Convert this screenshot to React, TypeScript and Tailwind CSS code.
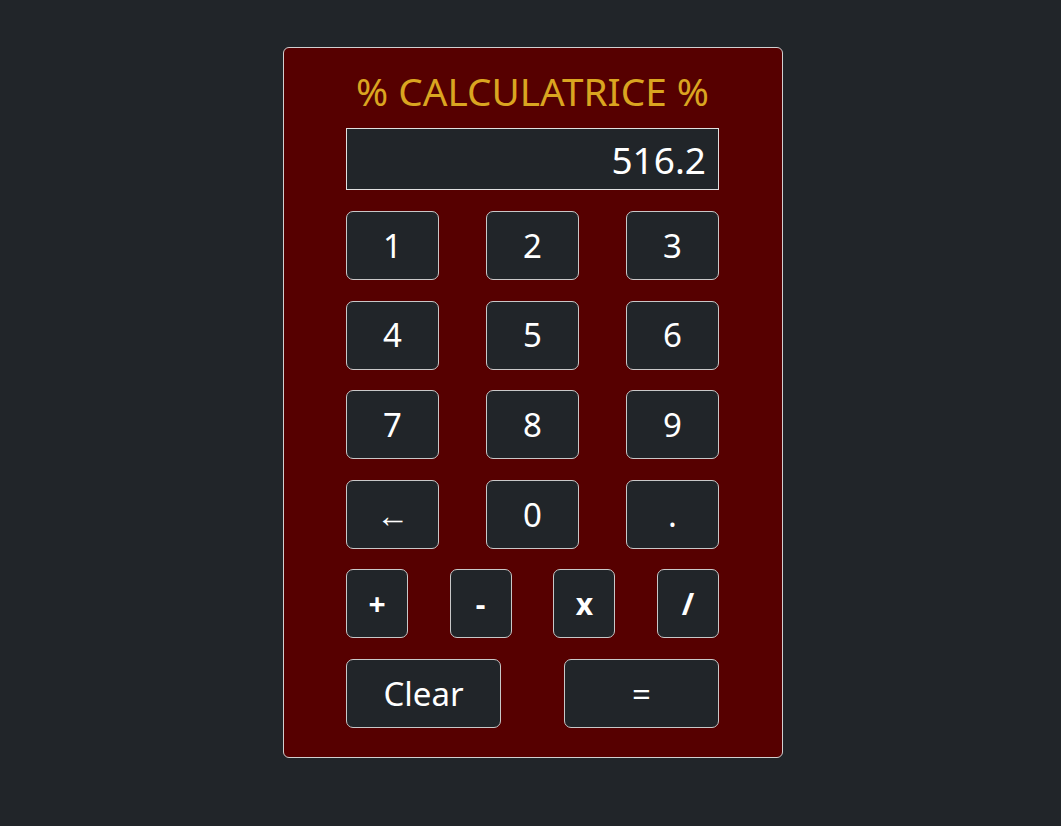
import React from "react";

const font = { fontFamily: '"Noto Sans", "Open Sans", sans-serif' };

function Btn({ label, w, bold }: { label: string; w: string; bold?: boolean }) {
  return (
    <button
      className={`${w} h-[69px] rounded-[7px] border border-[#c8c8c8] bg-[#212529] text-white flex items-center justify-center ${bold ? "font-bold text-[30px]" : "text-[33px]"}`}
    >
      {label}
    </button>
  );
}

export default function App() {
  const rows = [
    ["1", "2", "3"],
    ["4", "5", "6"],
    ["7", "8", "9"],
    ["←", "0", "."],
  ];
  return (
    <div className="min-h-[826px] w-full bg-[#212529] pt-[47px] pl-[4px] flex justify-center items-start" style={font}>
      <div className="w-[500px] h-[711px] rounded-[6px] border border-[#d0d0d0] bg-[#560000] flex flex-col items-center pt-[19px]">
        <h1 className="h-[48px] leading-[48px] text-[38.7px] text-[#daa520] text-center">% CALCULATRICE %</h1>
        <div className="mt-[13px] w-[373px] h-[62px] border border-[#e0e0e0] bg-[#212529] text-white text-[37px] flex items-center justify-end pr-[12px] leading-none">
          516.2
        </div>
        <div className="mt-[21px] w-[373px] flex flex-col gap-[20.6px]">
          {rows.map((r, i) => (
            <div key={i} className="flex justify-between">
              {r.map((l) => (
                <Btn key={l} label={l} w="w-[93px]" />
              ))}
            </div>
          ))}
          <div className="flex justify-between">
            {["+", "-", "x", "/"].map((l) => (
              <Btn key={l} label={l} w="w-[62px]" bold />
            ))}
          </div>
          <div className="flex justify-between">
            <Btn label="Clear" w="w-[155px]" />
            <Btn label="=" w="w-[155px]" />
          </div>
        </div>
      </div>
    </div>
  );
}
